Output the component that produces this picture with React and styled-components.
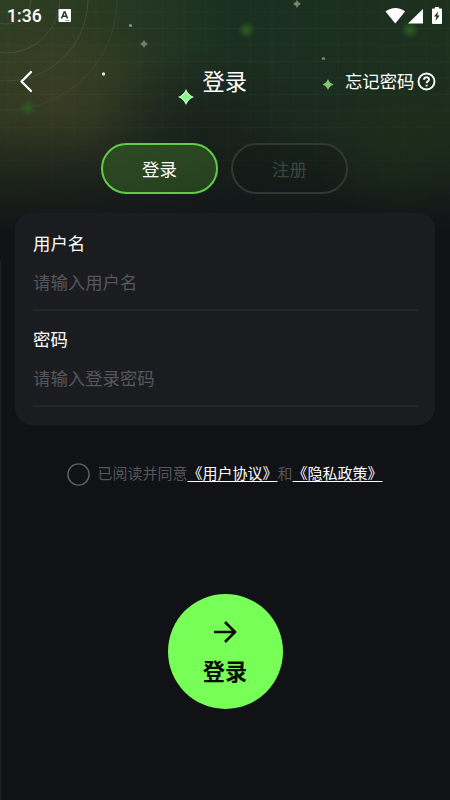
import React from 'react';
import styled, { createGlobalStyle, css } from 'styled-components';

const GlobalStyle = createGlobalStyle`
  * { box-sizing: border-box; }
  body { margin: 0; background: #111216; }
  button, input { font: inherit; margin: 0; }
`;

const Screen = styled.main`
  position: relative;
  width: 450px;
  height: 800px;
  overflow: hidden;
  display: flex;
  flex-direction: column;
  align-items: center;
  color: #fff;
  background: #111216;
  box-shadow: inset 1px 0 #1d2325;
  font-family: Roboto, 'Noto Sans CJK SC', sans-serif;
`;

const Backdrop = styled.svg`
  position: absolute;
  top: 0;
  left: 0;
  width: 450px;
  height: 260px;
`;

const StatusBar = styled.div`
  position: relative;
  width: 100%;
  height: 32px;
  padding: 0 15px 0 7px;
  display: flex;
  align-items: center;
  flex: none;
`;

const Clock = styled.span`
  width: 50px;
  font: 500 17.6px/32px Roboto, sans-serif;
`;

const StatusIcons = styled.svg`
  margin-left: auto;
  margin-right: -8px;
`;

const Header = styled.header`
  position: relative;
  width: 100%;
  height: 48px;
  margin-top: 26px;
  padding: 0 14.5px 0 18px;
  display: grid;
  grid-template-columns: 1fr auto 1fr;
  align-items: center;
  flex: none;
`;

const BackButton = styled.button`
  width: 18px;
  height: 26px;
  padding: 0;
  border: 0;
  background: none;
  color: inherit;
  display: flex;
`;

const Title = styled.h1`
  margin: 0 4px 0 0;
  font-size: 22.2px;
  line-height: 32px;
  font-weight: 400;
`;

const ForgotLink = styled.a`
  justify-self: end;
  display: flex;
  align-items: center;
  gap: 2px;
  font-size: 17.4px;
  line-height: 26px;
  white-space: nowrap;

  svg { margin-bottom: 2px; }
`;

const Tabs = styled.nav`
  position: relative;
  display: flex;
  gap: 13px;
  margin-top: 37px;
  margin-right: 1px;
  flex: none;
`;

const Tab = styled.button`
  width: 117px;
  height: 51px;
  padding: 0;
  border-radius: 26px;
  font-size: 17.4px;
  ${({ $active }) => $active ? css`
    color: #fff;
    border: 2px solid #62cb46;
    background: linear-gradient(165deg, #2f4a23 0%, #23401f 100%) border-box;
  ` : css`
    color: #3d453f;
    border: 2px solid #303832;
    background: rgba(17, 22, 22, 0.2);
  `}
`;

const Card = styled.section`
  position: relative;
  width: 420px;
  height: 212px;
  margin-top: 19px;
  padding: 2px 17px 0 18px;
  border-radius: 17px;
  background: #1b1c20;
  flex: none;
`;

const Field = styled.label`
  display: flex;
  flex-direction: column;
  height: 96px;
  border-bottom: 2px solid #242529;
`;

const FieldName = styled.span`
  margin-top: 16px;
  height: 26px;
  font-size: 17.4px;
  line-height: 26px;
`;

const FieldInput = styled.input`
  height: 28px;
  margin-top: 12px;
  padding: 0;
  border: 0;
  outline: 0;
  color: #fff;
  background: none;
  font-size: 17.4px;
  &::placeholder { color: #56575b; opacity: 1; }
`;

const Agreement = styled.div`
  display: flex;
  align-items: center;
  gap: 7px;
  height: 26px;
  margin-top: 36px;
  font-size: 15px;
  line-height: 24px;
  color: #55565a;
  white-space: nowrap;
  flex: none;
`;

const CheckCircle = styled.svg`
  width: 23px;
  height: 23px;
  fill: none;
  stroke: #606165;
  stroke-width: 1.4;
`;

const PolicyLink = styled.a`
  color: #fff;
  text-decoration: underline;
  text-decoration-thickness: 1px;
  text-decoration-skip-ink: none;
  text-underline-offset: 2px;
`;

const SubmitButton = styled.button`
  width: 115px;
  height: 115px;
  margin-top: 107px;
  padding: 27px 0 0;
  border: 0;
  border-radius: 50%;
  display: flex;
  flex-direction: column;
  align-items: center;
  gap: 13px;
  color: #080d06;
  background: #78ff57;
  font-size: 22.2px;
  line-height: 32px;
  font-weight: 700;
  flex: none;

  svg { margin-right: 1px; }
`;

const range = (count) => Array.from({ length: count }, (_, i) => i);

function Sparkle({ x, y, r, fill }) {
  const k = r * 0.27;
  return (
    <path
      fill={fill}
      d={`M${x} ${y - r}Q${x + k} ${y - k} ${x + r} ${y}Q${x + k} ${y + k} ${x} ${y + r}Q${x - k} ${y + k} ${x - r} ${y}Q${x - k} ${y - k} ${x} ${y - r}Z`}
    />
  );
}

function NightSky() {
  return (
    <Backdrop viewBox="0 0 450 260" aria-hidden="true">
      <defs>
        <linearGradient id="base" x1="0" x2="1" y1="0" y2="0">
          <stop offset="0" stopColor="#2f4023" />
          <stop offset=".3" stopColor="#243822" />
          <stop offset=".52" stopColor="#1b2f20" />
          <stop offset="1" stopColor="#1d301e" />
        </linearGradient>
        <radialGradient id="olive">
          <stop offset="0" stopColor="#424226" stopOpacity=".9" />
          <stop offset=".45" stopColor="#3b3e24" stopOpacity=".65" />
          <stop offset="1" stopColor="#29331f" stopOpacity="0" />
        </radialGradient>
        <radialGradient id="shade">
          <stop offset="0" stopColor="#1a1f1b" stopOpacity=".7" />
          <stop offset="1" stopColor="#1a1f1b" stopOpacity="0" />
        </radialGradient>
        <radialGradient id="glow">
          <stop offset="0" stopColor="#1e3119" stopOpacity=".6" />
          <stop offset="1" stopColor="#1e3119" stopOpacity="0" />
        </radialGradient>
        <radialGradient id="orb">
          <stop offset="0" stopColor="#306425" stopOpacity=".85" />
          <stop offset=".45" stopColor="#2b5a22" stopOpacity=".6" />
          <stop offset="1" stopColor="#285222" stopOpacity="0" />
        </radialGradient>
        <linearGradient id="fade" x1="0" x2="0" y1="0" y2="1">
          <stop offset=".2" stopColor="#111216" stopOpacity="0" />
          <stop offset=".48" stopColor="#111216" stopOpacity=".18" />
          <stop offset=".7" stopColor="#111216" stopOpacity=".62" />
          <stop offset=".9" stopColor="#111216" />
        </linearGradient>
      </defs>
      <rect width="450" height="260" fill="url(#base)" />
      <ellipse cx="55" cy="100" rx="135" ry="110" fill="url(#olive)" />
      <ellipse cx="200" cy="130" rx="110" ry="80" fill="url(#shade)" />
      <g stroke="#73916b" strokeOpacity=".06">
        {range(16).map((i) => <path key={`h${i}`} d={`M0 ${12 + i * 16.5}H450`} />)}
        {range(21).map((i) => <path key={`v${i}`} d={`M${8 + i * 22} 0V220`} />)}
      </g>
      <g fill="none" stroke="#7c9069" strokeOpacity=".24">
        <circle cx="6" cy="-1" r="25" />
        <circle cx="6" cy="-1" r="54" />
        <circle cx="6" cy="-1" r="82" />
        <circle cx="6" cy="-1" r="111" strokeOpacity=".14" />
      </g>
      <rect width="450" height="260" fill="url(#fade)" />
      <ellipse cx="405" cy="145" rx="100" ry="75" fill="url(#glow)" />
      <circle cx="27.5" cy="108" r="9" fill="url(#orb)" />
      <circle cx="246.5" cy="30" r="9" fill="url(#orb)" />
      <circle cx="410" cy="30" r="9" fill="url(#orb)" />
      <circle cx="103.5" cy="74" r="1.7" fill="#e2e7d8" />
      <circle cx="130.5" cy="25.5" r="1.6" fill="#85917c" />
      <circle cx="323.5" cy="58.5" r="1.6" fill="#758773" />
      <Sparkle x={144} y={44} r={4} fill="#6c8265" />
      <Sparkle x={297} y={4} r={4} fill="#6c8769" />
      <Sparkle x={328} y={84.5} r={5.5} fill="#7fc66e" />
      <Sparkle x={186} y={97} r={8} fill="#d5ffd4" />
      <Sparkle x={186} y={97} r={6} fill="#84f789" />
    </Backdrop>
  );
}

export default function App() {
  return (
    <Screen>
      <GlobalStyle />
      <NightSky />
      <StatusBar>
        <Clock>1:36</Clock>
        <svg width="14" height="14" viewBox="0 0 14 14">
          <rect x="1.5" y="0" width="12.5" height="13" rx="1" fill="#fff" />
          <path d="M4.5 9.5 7.2 3h.8L10.5 9.5M5.5 7.3h4" fill="none" stroke="#26371f" strokeWidth="1.5" />
          <path d="M8 11.5h4.5" stroke="#9aa694" />
        </svg>
        <StatusIcons width="58" height="20" viewBox="385 5 58 20" fill="#fff">
          <path d="M385.5 10.5C391 5.8 400 5.8 405 10.5L395.3 22.5Z" />
          <path d="M423 8V22.5H408Z" />
          <path fillRule="evenodd" d="M435 6h4v1.5h2q1 0 1 1V22q0 1-1 1h-8q-1 0-1-1V8.5q0-1 1-1h2ZM438 10.5l-4 5h2.4l-.8 4.5 4-5.500h-2.2Z" />
        </StatusIcons>
      </StatusBar>
      <Header>
        <BackButton aria-label="返回">
          <svg width="18" height="26" viewBox="0 0 18 26" fill="none" stroke="currentColor" strokeWidth="2.3" strokeLinecap="round" strokeLinejoin="round">
            <path d="M13 3 3.5 12.5 13 22" />
          </svg>
        </BackButton>
        <Title>登录</Title>
        <ForgotLink>
          忘记密码
          <svg width="19" height="19" viewBox="0 0 19 19" fill="none" stroke="currentColor" strokeWidth="1.9">
            <circle cx="9.5" cy="9.5" r="8" />
            <path d="M7 7.7c0-3.2 5-3.2 5-.2 0 1.7-2.4 1.8-2.4 3.7M9.6 12.7v1.7" />
          </svg>
        </ForgotLink>
      </Header>
      <Tabs>
        <Tab $active>登录</Tab>
        <Tab>注册</Tab>
      </Tabs>
      <Card>
        <Field>
          <FieldName>用户名</FieldName>
          <FieldInput placeholder="请输入用户名" />
        </Field>
        <Field>
          <FieldName>密码</FieldName>
          <FieldInput type="password" placeholder="请输入登录密码" />
        </Field>
      </Card>
      <Agreement>
        <CheckCircle viewBox="0 0 23 23"><circle cx="11.5" cy="11.5" r="10.6" /></CheckCircle>
        <span>已阅读并同意<PolicyLink>《用户协议》</PolicyLink>和<PolicyLink>《隐私政策》</PolicyLink></span>
      </Agreement>
      <SubmitButton>
        <svg width="24" height="22" viewBox="0 0 24 22" fill="none" stroke="currentColor" strokeWidth="2.7">
          <path d="M1 11h21M12 1l10 10-10 10" />
        </svg>
        登录
      </SubmitButton>
    </Screen>
  );
}
